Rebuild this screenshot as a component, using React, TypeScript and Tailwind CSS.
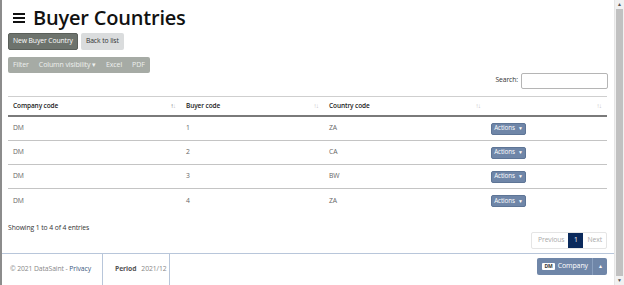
import React from "react";

type Row = { company: string; buyer: string; country: string };

const rows: Row[] = [
  { company: "DM", buyer: "1", country: "ZA" },
  { company: "DM", buyer: "2", country: "CA" },
  { company: "DM", buyer: "3", country: "BW" },
  { company: "DM", buyer: "4", country: "ZA" },
];

const font = { fontFamily: '"Open Sans", "Noto Sans", sans-serif' };

// Small up/down sort indicator used in the table header
const SortIcon = ({ active }: { active?: boolean }) => (
  <span className="text-[6.5px] leading-none tracking-[-1px] text-[#c8c8c8]">
    <span className={active ? "text-[#666]" : ""}>↑</span>↓
  </span>
);

const HeaderCell = ({ label, active }: { label: string; active?: boolean }) => (
  <div className="flex items-center justify-between pl-[5px] pr-[6px]">
    <span className="font-semibold text-[6.5px] text-[#222]">{label}</span>
    <SortIcon active={active} />
  </div>
);

export default function App() {
  return (
    <div className="w-[624px] h-[285px] flex bg-white overflow-hidden border-l-2 border-[#8c8c8c] text-[#555] tracking-[-0.1px]" style={font}>
      <div className="flex-1 flex flex-col border-r border-[#e6e6e6]">
        <div className="flex-1 px-[6px]">
          {/* Title */}
          <div className="flex items-center h-[33px] pl-[5px] pt-[2px]">
            <svg width="12" height="10" viewBox="0 0 12 10" className="mr-[8px]">
              <rect x="0" y="0" width="12" height="2" fill="#111" />
              <rect x="0" y="4" width="12" height="2" fill="#111" />
              <rect x="0" y="8" width="12" height="2" fill="#111" />
            </svg>
            <h1 className="text-[20px] font-semibold text-[#111] leading-none tracking-[-0.2px]">Buyer Countries</h1>
          </div>

          {/* Top buttons */}
          <div className="flex gap-[3px]">
            <button className="h-[17px] px-[4px] text-[6.8px] text-white bg-[#6d736d] border border-[#5a5f5a] rounded-[2px]">New Buyer Country</button>
            <button className="h-[17px] px-[5px] text-[6.8px] text-[#333] bg-[#dadcdd] rounded-[2px]">Back to list</button>
          </div>

          {/* Export buttons */}
          <div className="flex mt-[7px] w-max h-[16px] bg-[#a6aba5] rounded-[2px] text-[7px] text-[#eef0ee] items-center">
            <span className="px-[5px]">Filter</span>
            <span className="px-[5px]">Column visibility ▾</span>
            <span className="px-[5px]">Excel</span>
            <span className="px-[5px]">PDF</span>
          </div>

          {/* Search */}
          <div className="flex justify-end items-center -mt-[1px] h-[17px]">
            <span className="text-[6.8px] text-[#333] mr-[3px]">Search:</span>
            <input className="w-[87px] h-[16px] border border-[#b5b5b5] rounded-[2px]" />
          </div>

          {/* Table */}
          <div className="mt-[7px] mr-[1px] text-[6.8px]">
            <div className="grid grid-cols-[173px_143px_162px_1fr] h-[21px] border-t border-[#cfcfcf] border-b-2 border-b-[#7a7a7a]">
              <HeaderCell label="Company code" active />
              <HeaderCell label="Buyer code" />
              <HeaderCell label="Country code" />
              <HeaderCell label="" />
            </div>
            {rows.map((r, i) => (
              <div key={i} className={`grid grid-cols-[173px_143px_162px_1fr] h-[24px] items-center ${i < rows.length - 1 ? "border-b border-[#c4c4c4]" : ""}`}>
                <div className="pl-[5px] text-[#666]">{r.company}</div>
                <div className="pl-[5px] text-[#666]">{r.buyer}</div>
                <div className="pl-[5px] text-[#666]">{r.country}</div>
                <div className="pl-[5px]">
                  <button className="h-[12px] w-[35px] bg-[#6f86a8] border border-[#5e7596] rounded-[2px] text-[6.3px] text-white leading-none">
                    Actions<span className="ml-[3px] text-[5px]">▼</span>
                  </button>
                </div>
              </div>
            ))}
          </div>

          {/* Info + pagination */}
          <div className="flex justify-between mt-[9px] mr-[1px]">
            <span className="text-[6.8px] text-[#333] mt-[1px]">Showing 1 to 4 of 4 entries</span>
            <div className="flex h-[17px] mt-[10px] border border-[#e5e5e5] rounded-[2px] text-[6.8px] items-stretch">
              <span className="pl-[6px] pr-[4px] flex items-center text-[#aaa]">Previous</span>
              <span className="w-[15px] flex items-center justify-center bg-[#0b2a5c] text-white">1</span>
              <span className="px-[4px] flex items-center text-[#aaa]">Next</span>
            </div>
          </div>
        </div>

        {/* Footer */}
        <div className="h-[32px] border-t border-[#b8c6da] flex items-stretch text-[6.8px]">
          <div className="w-[101px] pl-[8px] flex items-center border-r border-[#b8c6da] text-[#888]">
            © 2021 DataSaint -&nbsp;<span className="text-[#3d5a80]">Privacy</span>
          </div>
          <div className="w-[67px] pl-[12px] flex items-center border-r border-[#b8c6da]">
            <span className="font-bold text-[#555]">Period</span>
            <span className="ml-[5px] text-[#888]">2021/12</span>
          </div>
          <div className="flex-1 flex items-start justify-end pr-[7px] pt-[4px]">
            <div className="flex h-[17px] bg-[#6f86a8] rounded-[2px] text-white text-[7px] items-stretch">
              <div className="flex items-center pl-[5px] pr-[4px]">
                <span className="bg-white text-[#333] font-bold text-[5px] px-[2px] leading-[7px] rounded-[1px] mr-[3px]">DM</span>
                Company
              </div>
              <div className="w-[15px] flex items-center justify-center border-l border-[#8aa0bf] text-[6px]">▴</div>
            </div>
          </div>
        </div>
      </div>

      {/* Scrollbar */}
      <div className="w-[9px] flex flex-col bg-[#f1f1f1]">
        <div className="h-[9px] flex items-center justify-center text-[5px] text-[#555]">▲</div>
        <div className="flex-1 mx-[1px] bg-[#c1c1c1]" />
        <div className="h-[9px] flex items-center justify-center text-[5px] text-[#555]">▼</div>
      </div>
    </div>
  );
}
